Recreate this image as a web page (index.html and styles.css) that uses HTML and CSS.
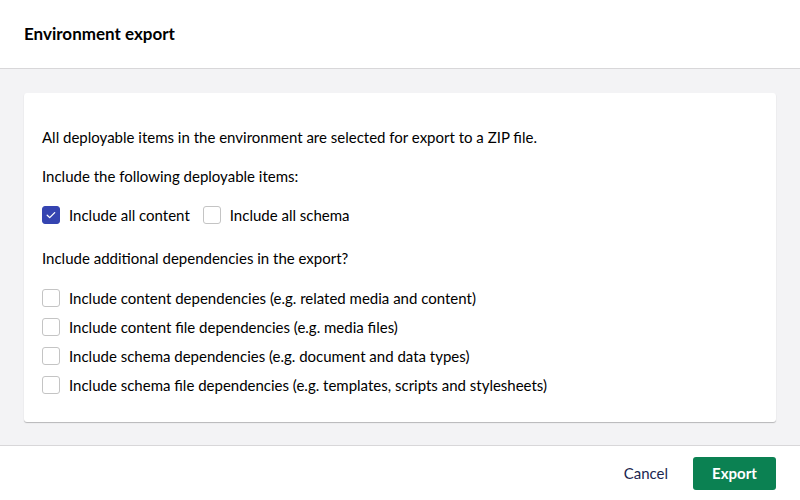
FILE: index.html
```html
<!DOCTYPE html>
<html>
<head>
<meta charset="utf-8">
<link rel="stylesheet" href="styles.css">
</head>
<body>
<div class="dialog">
  <header class="head"><h1 class="title">Environment export</h1></header>
  <main class="body">
    <section class="card">
      <p class="text first">All deployable items in the environment are selected for export to a ZIP file.</p>
      <p class="text">Include the following deployable items:</p>
      <div class="row inline">
        <label class="check"><span class="box checked"><svg viewBox="0 0 18 18" width="18" height="18"><path d="M5.2 9.2l2.5 2.4 5-5" fill="none" stroke="#fff" stroke-width="1.3" stroke-linecap="round" stroke-linejoin="round"/></svg></span>Include all content</label>
        <label class="check"><span class="box"></span>Include all schema</label>
      </div>
      <p class="text q">Include additional dependencies in the export?</p>
      <div class="list">
        <label class="check"><span class="box"></span>Include content dependencies (e.g. related media and content)</label>
        <label class="check"><span class="box"></span>Include content file dependencies (e.g. media files)</label>
        <label class="check"><span class="box"></span>Include schema dependencies (e.g. document and data types)</label>
        <label class="check"><span class="box"></span>Include schema file dependencies (e.g. templates, scripts and stylesheets)</label>
      </div>
    </section>
  </main>
  <footer class="foot">
    <button class="btn link">Cancel</button>
    <button class="btn primary">Export</button>
  </footer>
</div>
</body>
</html>
```
FILE: styles.css
```css
* { box-sizing: border-box; }
html, body { margin: 0; padding: 0; }
body {
  font-family: Lato, "Open Sans", sans-serif;
  color: #1b264f;
  background: #fff;
  width: 800px;
  height: 500px;
  overflow: hidden;
}
.dialog { display: flex; flex-direction: column; height: 500px; }
.head {
  height: 70px;
  padding: 0 24px;
  display: flex;
  align-items: center;
  border-bottom: 1px solid #d8d7d9;
  background: #fff;
}
.title {
  margin: 0;
  font-size: 17px;
  font-weight: 700;
  color: #000;
  padding-bottom: 2px;
}
.body {
  flex: 1;
  background: #f3f3f5;
  padding: 24px 24px 23px;
}
.card {
  background: #fff;
  border-radius: 3px;
  box-shadow: 0 1px 1px rgba(0,0,0,0.25);
  padding: 34px 18px 27px;
  color: #000;
  font-size: 15px;
}
.text { margin: 0; line-height: 20px; }
.first { margin-bottom: 19px; }
.q { margin-top: 23px; margin-bottom: 20px; }
.row { display: flex; gap: 13px; margin-top: 19px; }
.check {
  display: flex;
  align-items: center;
  gap: 9px;
  height: 20px;
  line-height: 20px;
}
.list { display: flex; flex-direction: column; gap: 9px; }
.box {
  width: 18px;
  height: 18px;
  border: 1px solid #c4c4c4;
  border-radius: 3px;
  background: #fff;
  flex: none;
  display: flex;
}
.box.checked { background: #3544b1; border-color: #3544b1; }
.box svg { margin: -1px; }
.foot {
  height: 55px;
  border-top: 1px solid #d8d7d9;
  display: flex;
  align-items: center;
  justify-content: flex-end;
  padding: 0 24px;
  gap: 11px;
}
.btn {
  font-family: Lato, sans-serif;
  font-size: 15px;
  border: none;
  border-radius: 3px;
  cursor: pointer;
}
.link { background: none; color: #1b264f; padding: 0 14px; height: 32px; }
.primary {
  background: #0b8152;
  color: #fff;
  font-weight: 700;
  width: 83px;
  height: 33px;
}
```
